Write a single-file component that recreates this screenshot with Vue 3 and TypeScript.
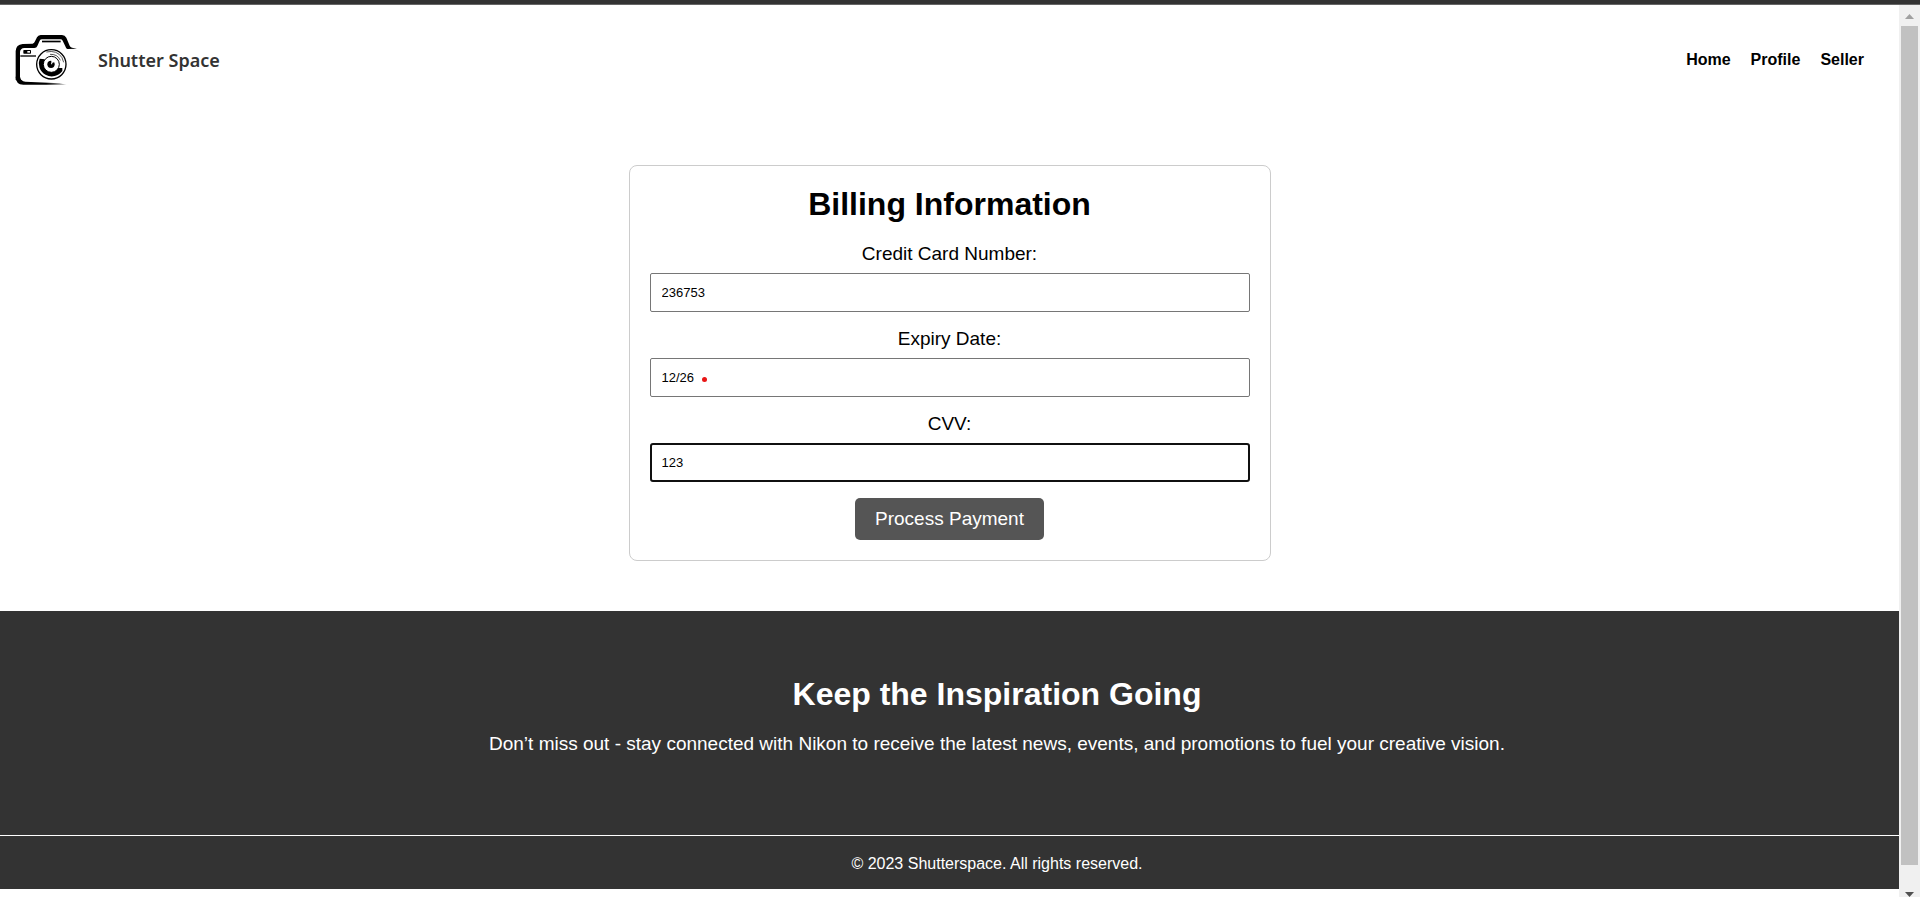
<script setup lang="ts">
import { ref } from 'vue'

interface NavItem {
  label: string
  href: string
}

const navItems: NavItem[] = [
  { label: 'Home', href: '#home' },
  { label: 'Profile', href: '#profile' },
  { label: 'Seller', href: '#seller' },
]

const cardNumber = ref('236753')
const expiryDate = ref('12/26')
const cvv = ref('123')
</script>

<template>
  <div class="window">
    <div class="top-strip"></div>
    <div class="viewport">
      <div class="page">
        <header class="header">
          <a class="brand" href="#home">
            <svg class="logo" viewBox="45 102 189 156" aria-hidden="true">
              <defs>
                <linearGradient id="base-fade" x1="0" x2="1" y1="0" y2="0">
                  <stop offset="0.6" stop-color="#000" />
                  <stop offset="1" stop-color="#000" stop-opacity="0.2" />
                </linearGradient>
              </defs>
              <path
                d="M47 153Q48 134 68 132L98 131Q103 130 105 124L111 112Q114 106 122 105H186Q195 106 199 113L209 137Q211 142 216 143L231 146L202 147Q198 145 197 141L188 122Q186 118 181 118H126Q121 118 119 122L112 138Q110 144 103 144H73Q61 145 60 156V231Q61 244 76 245L47 240Z"
              />
              <path
                fill="url(#base-fade)"
                d="M47 230Q47 253 70 254H200L178 250L76 245Q61 244 60 231Z"
              />
              <path d="M126 122H182V127H126Z" />
              <path d="M61 166H108V170H61Z" />
              <rect x="70" y="150" width="23" height="11" rx="2" />
              <rect x="82" y="153" width="8" height="5" fill="#fff" />
              <circle cx="154" cy="193" r="44" fill="#fff" stroke="#000" stroke-width="4" />
              <path
                d="M119 176A39 39 0 0 0 187 213L187 204L172 204A23 23 0 0 1 131 190L134 178Z"
              />
              <circle cx="154" cy="193" r="24" fill="#fff" stroke="#000" stroke-width="3" />
              <circle cx="153" cy="193" r="11" />
              <path d="M154 180V190L164 186V180Z" fill="#fff" />
              <circle cx="155" cy="191" r="2" fill="#fff" />
              <path
                d="M139 156Q171 149 186 173L191 187M150 163Q173 162 181 181"
                fill="none"
                stroke="#000"
                stroke-width="2"
              />
            </svg>
            <span class="brand-name">Shutter Space</span>
          </a>
          <nav class="nav">
            <a v-for="item in navItems" :key="item.label" :href="item.href">{{ item.label }}</a>
          </nav>
        </header>

        <main class="main">
          <form class="card" @submit.prevent>
            <h1 class="title">Billing Information</h1>
            <div class="field">
              <label for="card-number">Credit Card Number:</label>
              <input id="card-number" v-model="cardNumber" type="text" />
            </div>
            <div class="field">
              <label for="expiry-date">Expiry Date:</label>
              <div class="control">
                <input id="expiry-date" v-model="expiryDate" type="text" />
                <span class="marker"></span>
              </div>
            </div>
            <div class="field">
              <label for="cvv">CVV:</label>
              <input id="cvv" v-model="cvv" class="active" type="text" />
            </div>
            <button class="submit" type="submit">Process Payment</button>
          </form>
        </main>

        <footer class="footer">
          <section class="promo">
            <h2>Keep the Inspiration Going</h2>
            <p>
              Don’t miss out - stay connected with Nikon to receive the latest news, events, and
              promotions to fuel your creative vision.
            </p>
          </section>
          <p class="copyright">© 2023 Shutterspace. All rights reserved.</p>
        </footer>
      </div>

      <div class="scrollbar" aria-hidden="true">
        <svg class="arrow up" viewBox="0 0 9 5"><path d="M0 5L4.500 0L9 5Z" /></svg>
        <div class="thumb"></div>
        <svg class="arrow down" viewBox="0 0 9 5"><path d="M0 0H9L4.500 5Z" /></svg>
      </div>
    </div>
  </div>
</template>

<style>
body {
  margin: 0;
  background: #fff;
}
</style>

<style scoped>
.window {
  display: flex;
  flex-direction: column;
  height: 100vh;
  overflow: hidden;
  font-family: Arial, 'Liberation Sans', sans-serif;
  color: #000;
}

.top-strip {
  flex: none;
  height: 4px;
  background: #333;
  border-bottom: 1px solid #666;
}

.viewport {
  flex: 1;
  display: flex;
  min-height: 0;
}

.page {
  flex: 1;
  min-width: 0;
}

.header {
  display: flex;
  align-items: center;
  justify-content: space-between;
  padding: 29px 35px 29px 15px;
}

.brand {
  display: flex;
  align-items: center;
  gap: 20px;
  color: #333;
  text-decoration: none;
}

.logo {
  width: 63px;
  height: 52px;
}

.brand-name {
  font-family: 'Trebuchet MS', 'Noto Sans', sans-serif;
  font-size: 18px;
  font-weight: 600;
  line-height: 24px;
}

.nav {
  display: flex;
  gap: 20px;
}

.nav a {
  color: #000;
  font-size: 16px;
  font-weight: bold;
  line-height: 22px;
  text-decoration: none;
}

.main {
  padding: 50px 20px;
}

.card {
  box-sizing: border-box;
  max-width: 642px;
  margin: 0 auto;
  padding: 20px;
  border: 1px solid #ccc;
  border-radius: 8px;
  text-align: center;
}

.title {
  margin: 0 0 21px;
  font-size: 32px;
  line-height: 36px;
}

.field {
  margin-bottom: 16px;
}

.field label {
  display: block;
  margin-bottom: 8px;
  font-size: 19px;
  line-height: 22px;
}

.field input {
  display: block;
  box-sizing: border-box;
  width: 100%;
  height: 39px;
  padding: 0 11px;
  border: 1px solid #767676;
  border-radius: 2px;
  outline: none;
  background: #fff;
  color: #000;
  font-family: inherit;
  font-size: 13px;
}

.field input.active {
  padding: 0 10px;
  border: 2px solid #101010;
  border-radius: 3px;
}

.control {
  position: relative;
}

.marker {
  position: absolute;
  top: 19px;
  left: 52px;
  width: 5px;
  height: 5px;
  border-radius: 50%;
  background: #e81515;
}

.submit {
  display: block;
  margin: 0 auto;
  padding: 10px 20px;
  border: 0;
  border-radius: 5px;
  background: #555;
  color: #fff;
  font-family: inherit;
  font-size: 19px;
  line-height: 22px;
}

.footer {
  background: #333;
  color: #fff;
  text-align: center;
}

.promo {
  padding: 65px 0 77px 5%;
}

.promo h2 {
  margin: 0 0 17px;
  font-size: 32px;
  line-height: 36px;
}

.promo p {
  margin: 0;
  font-size: 19px;
  line-height: 29px;
}

.copyright {
  margin: 0;
  padding: 18px 0 15px 5%;
  border-top: 1px solid #fff;
  font-size: 16px;
  line-height: 20px;
}

.scrollbar {
  flex: none;
  display: flex;
  flex-direction: column;
  align-items: center;
  width: 21px;
  background: #f0f0f0;
}

.thumb {
  flex: 1;
  width: 17px;
  background: #c1c1c1;
}

.arrow {
  width: 9px;
  height: 5px;
}

.up {
  margin: 9px 0 7px;
  fill: #a0a0a0;
}

.down {
  margin: 27px 0 0;
  fill: #505050;
  flex: none;
}
</style>
